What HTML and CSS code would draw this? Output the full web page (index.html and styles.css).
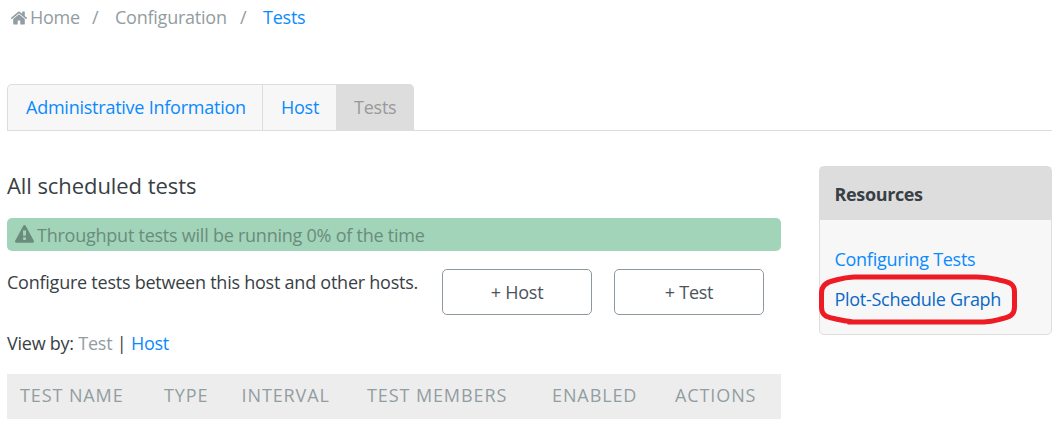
FILE: index.html
```
<!DOCTYPE html>
<html lang="en">
<head>
<meta charset="utf-8">
<title>Tests</title>
<link rel="stylesheet" href="styles.css">
</head>
<body>
<nav class="breadcrumb">
  <a class="crumb home"><svg class="icon-home" viewBox="0 0 1792 1792"><path d="M1472 992v480q0 26-19 45t-45 19h-384v-384h-256v384h-384q-26 0-45-19t-19-45v-480q0-1 .5-3t.5-3l575-474 575 474q1 2 1 6zm223-69l-62 74q-8 9-21 11h-3q-13 0-21-7l-692-577-692 577q-12 8-24 7-13-2-21-11l-62-74q-8-10-7-23.500t11-21.500l719-599q32-26 76-26t76 26l244 204v-195q0-14 9-23t23-9h192q14 0 23 9t9 23v408l219 182q10 8 11 21.500t-7 23.500z"/></svg><span>Home</span></a>
  <span class="slash first">/</span>
  <a class="crumb config">Configuration</a>
  <span class="slash">/</span>
  <a class="crumb current">Tests</a>
</nav>
<div class="tabs">
  <a class="tab admin">Administrative Information</a>
  <a class="tab host">Host</a>
  <a class="tab active">Tests</a>
</div>
<div class="columns">
  <main class="main">
    <h1 class="title">All scheduled tests</h1>
    <div class="alert"><svg class="icon-warn" viewBox="0 0 1792 1792"><path d="M1024 1375v-190q0-14-9.500-23.500t-22.500-9.500h-192q-13 0-22.500 9.500t-9.500 23.500v190q0 14 9.500 23.500t22.500 9.500h192q13 0 22.500-9.500t9.500-23.500zm-2-374l18-459q0-12-10-19-13-11-24-11h-220q-11 0-24 11-10 7-10 21l17 457q0 10 10 16.500t24 6.500h185q14 0 23.500-6.500t10.500-16.500zm-14-934l768 1408q35 63-2 126-17 29-46.500 46t-63.500 17h-1536q-34 0-63.500-17t-46.500-46q-37-63-2-126l768-1408q17-31 47-49t65-18 65 18 47 49z"/></svg><span>Throughput tests will be running 0% of the time</span></div>
    <div class="configure">
      <p class="hint">Configure tests between this host and other hosts.</p>
      <a class="button">+ Host</a>
      <a class="button">+ Test</a>
    </div>
    <p class="view">View by: <span class="muted">Test</span> | <a class="link">Host</a></p>
    <div class="table-head">
      <span>TEST NAME</span><span>TYPE</span><span>INTERVAL</span><span>TEST MEMBERS</span><span>ENABLED</span><span>ACTIONS</span>
    </div>
  </main>
  <aside class="resources">
    <h2 class="resources-title">Resources</h2>
    <div class="resources-body">
      <a class="link">Configuring Tests</a>
      <a class="link hovered">Plot-Schedule Graph</a>
    </div>
    <svg class="marker" viewBox="0 0 200 52"><path d="M31 47.500 C24 47 20 45.500 15 44.500 C6 43 2.500 40 2.500 33 V19 C2.500 11 8 8 15 6.500 C21 5 25 3.500 35 3 H158 C170 3 174 4.500 180 6 C191 8 195.500 10 195.500 18 V33 C195.500 41 191 43 182 45 C176 46.500 173 47.500 165 48 H31Z"/></svg>
  </aside>
</div>
</body>
</html>
```

FILE: styles.css
```
* { box-sizing: border-box; }
body {
  margin: 0;
  padding: 0 7px;
  background: #fff;
  color: #383f45;
  font: 18px/24px "Open Sans", sans-serif;
  letter-spacing: -0.24px;
  white-space: nowrap;
}
h1, h2, p { margin: 0; }
.breadcrumb { display: flex; height: 84px; padding-top: 5px; color: #929da1; }
.home { display: flex; width: 85px; padding-left: 3px; }
.icon-home { width: 18px; height: 18px; margin: 4px 2px 0 0; fill: currentColor; flex: none; }
.slash { width: 23px; }
.config { width: 125px; }
.current, .link { color: #0a8aff; }
.tabs { display: flex; height: 47px; border-bottom: 1px solid #ddd; }
.tab {
  height: 46px;
  padding: 10px 0 0 18px;
  border-top: 1px solid #ddd;
  background: #f7f7f7;
  color: #0a8aff;
}
.admin { width: 256px; border-left: 1px solid #ddd; border-right: 1px solid #ddd; border-top-left-radius: 5px; }
.host { width: 73px; }
.active { width: 78px; background: #ddd; color: #999; border-top-right-radius: 5px; }
.columns { display: flex; gap: 38px; padding-top: 35px; }
.main { width: 774px; }
.title { height: 52px; padding-top: 4px; font-size: 22px; line-height: 30px; font-weight: 400; letter-spacing: -0.07px; }
.alert {
  display: flex;
  height: 33px;
  padding: 5px 0 0 8px;
  border-radius: 5px;
  background: #a2d4b9;
  color: #6b8c7c;
}
.icon-warn { width: 19px; height: 19px; margin: 2px 3px 0 0; fill: currentColor; flex: none; }
.configure { display: flex; gap: 22px; padding-top: 18px; }
.hint { width: 413px; padding-top: 1px; }
.button {
  width: 150px;
  height: 46px;
  padding-top: 10px;
  border: 1px solid #8e999f;
  border-radius: 5px;
  color: #4b545b;
  text-align: center;
}
.view { height: 59px; padding-top: 16px; }
.muted { color: #929da1; }
.table-head {
  display: grid;
  grid-template-columns: 144px 77.500px 125.500px 185px 123px 1fr;
  height: 45px;
  padding: 9px 0 0 13px;
  background: #ededed;
  color: #929da1;
  letter-spacing: 0.9px;
}
.resources {
  position: relative;
  width: 233px;
  height: 169px;
  border: 1px solid #ddd;
  border-radius: 5px;
  background: #f7f7f7;
}
.resources-title { height: 53px; padding: 15px 0 0 14.500px; background: #ddd; font-size: 18px; line-height: 24px; font-weight: 700; letter-spacing: -0.36px; }
.resources-body { display: flex; flex-direction: column; gap: 16px; padding: 27px 0 0 14.500px; letter-spacing: -0.28px; }
.hovered { color: #0969c8; }
.marker { position: absolute; left: -1px; top: 107px; width: 200px; height: 52px; fill: none; stroke: #ed1c24; stroke-width: 5; }
```
